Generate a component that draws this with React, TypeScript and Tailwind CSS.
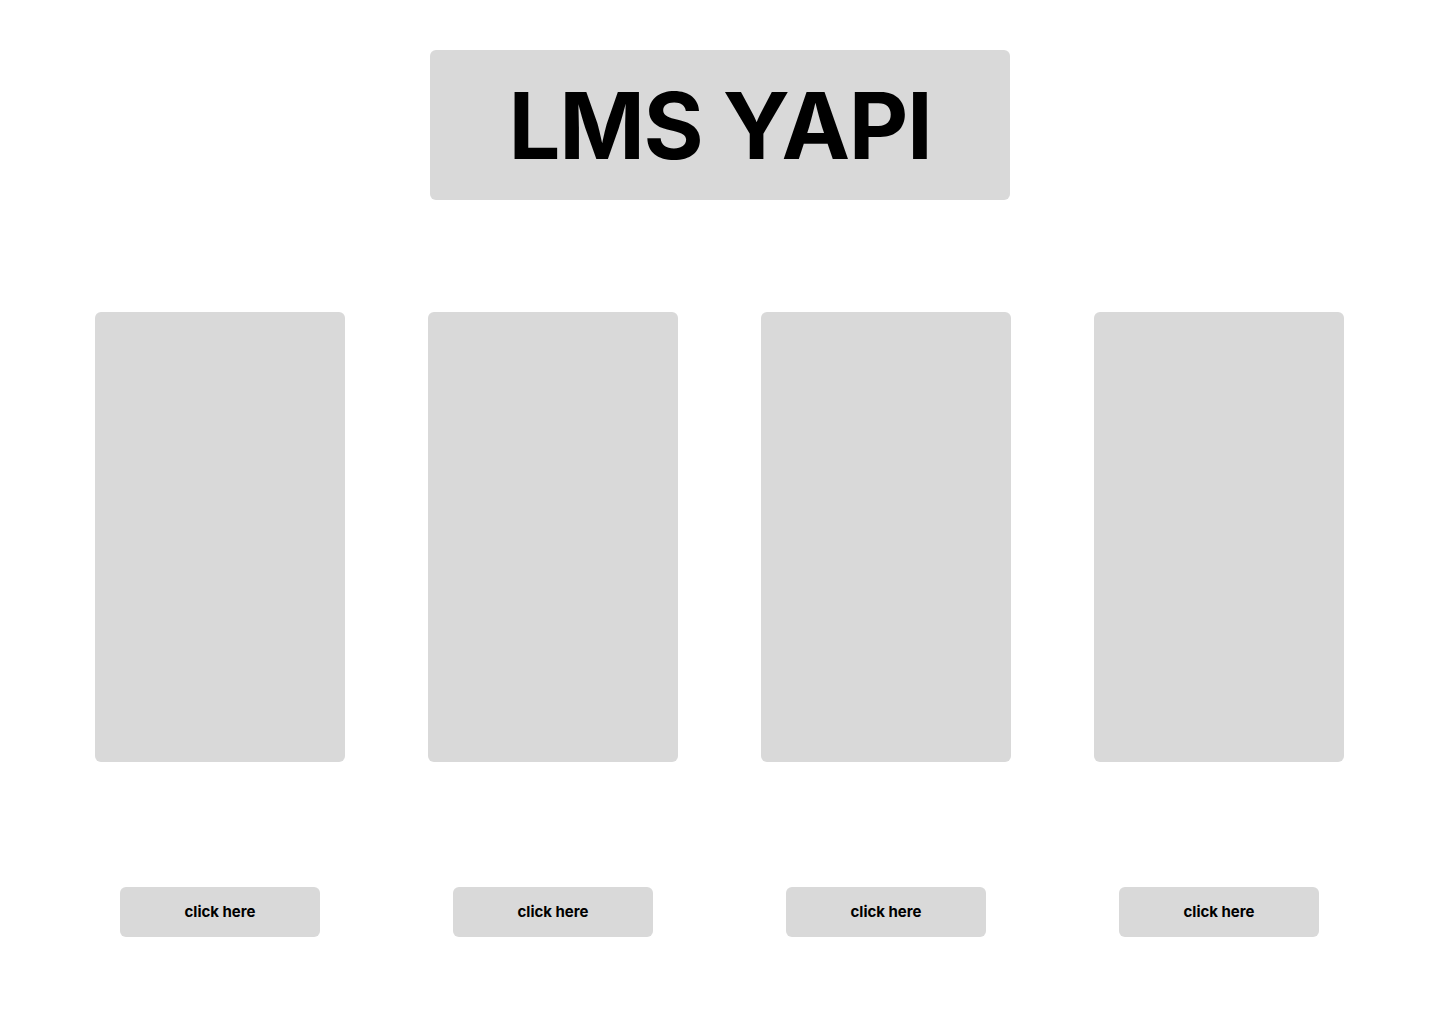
import React from 'react';

const cards = [1, 2, 3, 4];

const App: React.FC = () => {
  return (
    <div className="min-h-screen bg-white [font-family:Inter,'Noto_Sans',sans-serif] text-black">
      <div className="flex justify-center pt-[50px]">
        <div className="w-[580px] h-[150px] bg-[#d9d9d9] rounded-md flex items-center justify-center">
          <h1 className="text-[92px] font-bold leading-none tracking-[-0.015em] pt-[2px]">LMS YAPI</h1>
        </div>
      </div>

      <div className="flex gap-[83px] pl-[95px] mt-[112px]">
        {cards.map((c) => (
          <div key={c} className="w-[250px] flex flex-col items-center">
            <div className="w-[250px] h-[450px] bg-[#d9d9d9] rounded-md" />
            <button className="mt-[125px] w-[200px] h-[50px] bg-[#d9d9d9] rounded-md text-[15px] font-bold">
              click here
            </button>
          </div>
        ))}
      </div>
    </div>
  );
};

export default App;
